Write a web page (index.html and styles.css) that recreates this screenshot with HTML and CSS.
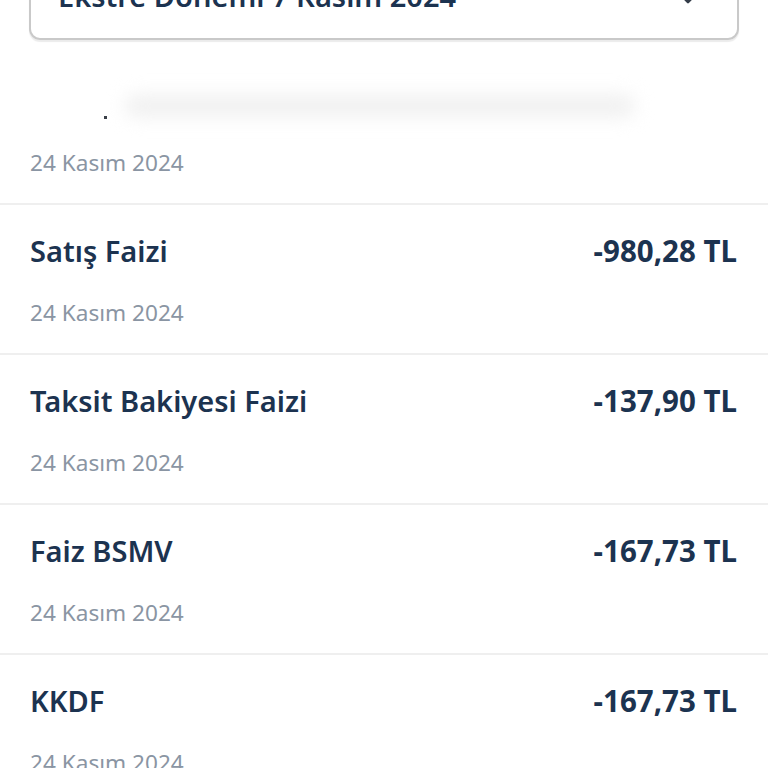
FILE: index.html
```html
<!DOCTYPE html>
<html lang="tr">
<head>
<meta charset="utf-8">
<link rel="stylesheet" href="styles.css">
</head>
<body>
<div class="screen">
  <div class="select">
    <span class="select-text">Ekstre Dönemi 7 Kasım 2024</span>
    <svg class="chevron" width="22" height="14" viewBox="0 0 22 14"><path d="M3 3 L11 11 L19 3" fill="none" stroke="#333c48" stroke-width="2.6" stroke-linecap="round" stroke-linejoin="round"/></svg>
  </div>
  <ul class="list">
    <li class="row row-first">
      <div class="row-top">
        <span class="blur-bar"></span>
        <span class="dot"></span>
      </div>
      <div class="date">24 Kasım 2024</div>
    </li>
    <li class="row">
      <div class="row-top"><span class="title">Satış Faizi</span><span class="amount">-980,28 TL</span></div>
      <div class="date">24 Kasım 2024</div>
    </li>
    <li class="row">
      <div class="row-top"><span class="title">Taksit Bakiyesi Faizi</span><span class="amount">-137,90 TL</span></div>
      <div class="date">24 Kasım 2024</div>
    </li>
    <li class="row">
      <div class="row-top"><span class="title">Faiz BSMV</span><span class="amount">-167,73 TL</span></div>
      <div class="date">24 Kasım 2024</div>
    </li>
    <li class="row">
      <div class="row-top"><span class="title">KKDF</span><span class="amount">-167,73 TL</span></div>
      <div class="date">24 Kasım 2024</div>
    </li>
  </ul>
</div>
</body>
</html>
```

FILE: styles.css
```css
html, body {
  margin: 0;
  padding: 0;
  background: #ffffff;
}
body {
  width: 768px;
  height: 768px;
  overflow: hidden;
  font-family: "Noto Sans", "Open Sans", sans-serif;
}
.screen {
  width: 768px;
}
.select {
  box-sizing: border-box;
  margin: -41px 29px 0 29px;
  height: 81px;
  border: 2px solid #c9c9c9;
  border-radius: 11px;
  box-shadow: 0 2px 1px rgba(0, 0, 0, 0.08);
  display: flex;
  align-items: flex-start;
  justify-content: space-between;
  padding: 0 38px 0 27px;
}
.select-text {
  font-size: 29px;
  line-height: 36px;
  font-weight: 600;
  color: #1c3350;
  margin-top: 17px;
}
.chevron {
  margin-top: 30px;
}
.list {
  list-style: none;
  margin: 0;
  padding: 0;
}
.row {
  box-sizing: border-box;
  height: 150px;
  padding: 28px 31px 0 30px;
  border-bottom: 2px solid #efefef;
}
.row-first {
  margin-top: 15px;
  height: 150px;
}
.row-top {
  display: flex;
  justify-content: space-between;
  align-items: center;
  height: 36px;
  position: relative;
}
.title {
  font-size: 29px;
  line-height: 36px;
  font-weight: 600;
  color: #1c3350;
}
.amount {
  font-size: 29.5px;
  line-height: 36px;
  font-weight: 700;
  color: #1c3350;
}
.date {
  margin-top: 29px;
  font-size: 22.6px;
  line-height: 30px;
  font-weight: 400;
  color: #8a95a3;
}
.blur-bar {
  position: absolute;
  left: 95px;
  top: 12px;
  width: 510px;
  height: 22px;
  background: #f0f0f0;
  border-radius: 11px;
  filter: blur(9px);
}
.dot {
  position: absolute;
  left: 74px;
  top: 33px;
  width: 3px;
  height: 3px;
  background: #3a3f48;
}
```
